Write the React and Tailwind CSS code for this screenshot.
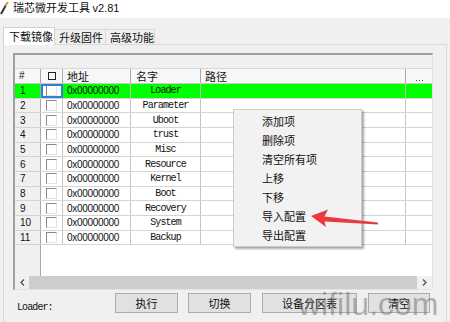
const rows = ["Loader", "Parameter", "Uboot", "trust", "Misc", "Resource", "Kernel", "Boot", "Recovery", "System", "Backup"]

const menu = ["添加项", "删除项", "清空所有项", "上移", "下移", "导入配置", "导出配置"]

const cjk = { fontFamily: '"Noto Sans CJK SC", "Liberation Sans", sans-serif' }

function CheckBox() {
  return <div className="w-[11px] h-[11px] bg-white border-t border-l border-[#8a8a8a] border-r border-b border-r-[#e3e3e3] border-b-[#e3e3e3]" />
}

function Row({ n, name }) {
  const sel = n === 1
  return (
    <div className={`flex h-[14.67px] border-b border-[#d4d4d4] ${sel ? "bg-[#00ff00]" : "bg-white"}`}>
      <div className={`w-[26px] shrink-0 pl-[5px] flex items-center border-r border-[#a8a8a8] text-[10px] font-['Liberation_Sans'] text-[#111] ${sel ? "" : "bg-[#f0f0f0]"}`}>{n}</div>
      <div className={`w-[22px] shrink-0 flex items-center justify-center border-r border-[#c4c4c4] ${sel ? "bg-white outline-2 -outline-offset-2 outline-[#2f7fd6]" : ""}`}>
        <CheckBox />
      </div>
      <div className="w-[68px] shrink-0 pl-[4px] flex items-center border-r border-[#c4c4c4] text-[10px] tracking-[-0.3px] font-['Liberation_Sans'] text-[#111]">0x00000000</div>
      <div className="w-[70px] shrink-0 flex items-center justify-center border-r border-[#c4c4c4] text-[10px] tracking-[-0.9px] font-['Liberation_Mono'] text-[#111]">{name}</div>
      <div className="w-[205px] shrink-0 border-r border-[#c4c4c4]" />
      <div className="flex-1" />
    </div>
  )
}

export default function App() {
  return (
    <div className="relative w-[450px] h-[322px] overflow-hidden bg-[#f0f0f0] text-[#111]" style={cjk}>
      {/* title */}
      <div className="h-[18px] bg-white flex items-start">
        <svg width="10" height="15" viewBox="0 0 10 15" className="mt-[1px]">
          <path d="M1 13 L6 4" stroke="#333" strokeWidth="2" />
          <path d="M5 5 L8 1" stroke="#c9a227" strokeWidth="2" />
        </svg>
        <div className="ml-[3px] text-[11px] leading-[14px]">瑞芯微开发工具 <span className="font-['Liberation_Sans']">v2.81</span></div>
      </div>

      {/* tabs */}
      <div className="flex items-end h-[17px] mt-[9px] pl-[3px] relative z-10">
        <div className="w-[52px] h-[18px] -mb-px bg-white border border-b-0 border-[#d0d0d0] text-[11px] leading-[16px] pl-[5px]">下载镜像</div>
        <div className="w-[51px] h-[15px] border border-l-0 border-b-0 border-[#d9d9d9] text-[11px] leading-[14px] pl-[4px]">升级固件</div>
        <div className="w-[49px] h-[15px] border border-l-0 border-b-0 border-[#d9d9d9] text-[11px] leading-[14px] pl-[4px]">高级功能</div>
      </div>

      <div className="ml-[3px] w-[444px] h-[300px] border border-[#d9d9d9] pl-[9px] pt-[8px]">
        {/* list */}
        <div className="w-[420px] h-[237px] flex flex-col border-t-2 border-l-2 border-t-[#a0a0a0] border-l-[#a0a0a0] border-r border-b border-r-[#e3e3e3] border-b-[#e3e3e3]">
          <div className="h-[14px] bg-[#f0f0f0] border-b border-[#d8d8d8]" />
          <div className="flex h-[15px] bg-[#f7f7f7] border-b border-[#c8c8c8] text-[11px] leading-[14px]">
            <div className="w-[26px] shrink-0 pl-[4px] border-r border-[#a8a8a8] font-['Liberation_Sans'] text-[10px]">#</div>
            <div className="w-[22px] shrink-0 flex items-center justify-center border-r border-[#a8a8a8]">
              <div className="w-[8px] h-[8px] border border-[#222]" />
            </div>
            <div className="w-[68px] shrink-0 pl-[4px] border-r border-[#a8a8a8]">地址</div>
            <div className="w-[70px] shrink-0 pl-[5px] border-r border-[#a8a8a8]">名字</div>
            <div className="w-[205px] shrink-0 pl-[4px] border-r border-[#a8a8a8]">路径</div>
            <div className="flex-1 flex items-end justify-center pb-[2px]">
              <div className="flex gap-[2px]">
                <div className="w-px h-px bg-[#555]" />
                <div className="w-px h-px bg-[#555]" />
                <div className="w-px h-px bg-[#555]" />
              </div>
            </div>
          </div>
          {rows.map((r, i) => (
            <Row key={r} n={i + 1} name={r} />
          ))}
          <div className="flex-1 flex bg-white">
            <div className="w-[26px] bg-[#f0f0f0] border-r border-[#a8a8a8]" />
          </div>
          <div className="h-[13px] flex bg-[#f0f0f0]">
            <div className="w-[14px] flex items-center justify-center">
              <svg width="5" height="7" viewBox="0 0 5 7"><path d="M4 0.5 L1 3.5 L4 6.5" stroke="#505050" strokeWidth="1.3" fill="none" /></svg>
            </div>
            <div className="w-[388px] bg-[#cdcdcd]" />
            <div className="flex-1 flex items-center justify-center">
              <svg width="5" height="7" viewBox="0 0 5 7"><path d="M1 0.5 L4 3.5 L1 6.5" stroke="#505050" strokeWidth="1.3" fill="none" /></svg>
            </div>
          </div>
        </div>

        {/* bottom */}
        <div className="flex items-start mt-[3px] -ml-[9px] pl-[13px]">
          <div className="w-[98px] pt-[7px] text-[10px] tracking-[-0.9px] font-['Liberation_Mono']">Loader:</div>
          <button className="w-[63px] h-[20px] bg-[#e1e1e1] border border-[#adadad] text-[11px] leading-[18px]">执行</button>
          <button className="ml-[10px] w-[63px] h-[20px] bg-[#e1e1e1] border border-[#adadad] text-[11px] leading-[18px]">切换</button>
          <button className="ml-[11px] w-[95px] h-[20px] bg-[#e1e1e1] border border-[#adadad] text-[11px] leading-[18px]">设备分区表</button>
          <button className="ml-[11px] w-[62px] h-[20px] bg-[#e1e1e1] border border-[#adadad] text-[11px] leading-[18px]">清空</button>
        </div>
      </div>

      {/* context menu */}
      <div className="absolute left-[233px] top-[109px] w-[129px] h-[138px] bg-[#f2f2f2] border border-[#cccccc] shadow-[2px_2px_2px_rgba(0,0,0,0.35)] pt-[2px]">
        {menu.map((m) => (
          <div key={m} className="h-[19px] pl-[28px] text-[11px] leading-[19px]">{m}</div>
        ))}
      </div>

      {/* arrow */}
      <svg className="absolute left-0 top-0" width="450" height="322">
        <polygon points="311,216 328,209.5 324.5,216.5 378,222.5 378,224.5 324.5,221.5 326,227" fill="#ea3a3f" />
      </svg>

      {/* watermark */}
      <div className="absolute left-[298px] top-[288px] text-[32px] leading-none font-['Liberation_Sans'] text-[rgba(110,110,110,0.5)] pointer-events-none">wifilu.com</div>
    </div>
  )
}
